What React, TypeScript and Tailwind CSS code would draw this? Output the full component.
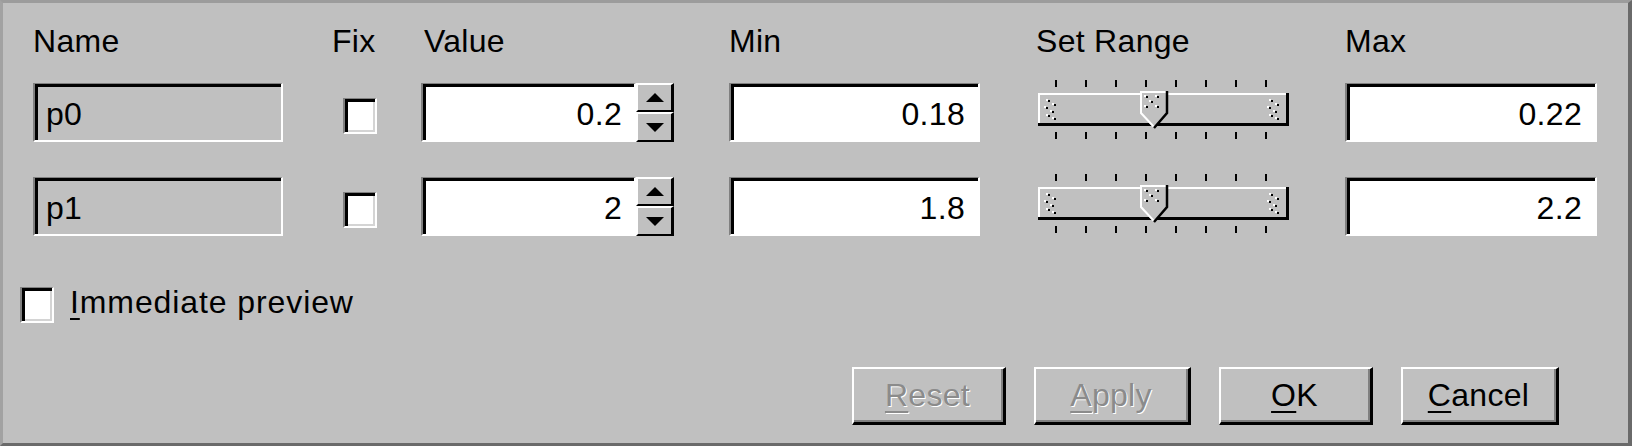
import React from "react";

const FONT = "font-['Liberation_Sans',Arial,sans-serif]";

type Param = { name: string; value: string; min: string; max: string };

const params: Param[] = [
  { name: "p0", value: "0.2", min: "0.18", max: "0.22" },
  { name: "p1", value: "2", min: "1.8", max: "2.2" },
];

const COLS = "grid grid-cols-[298px_90px_308px_307px_309px_252px]";

function Sunken({
  className = "",
  innerClass = "",
  children,
}: {
  className?: string;
  innerClass?: string;
  children?: React.ReactNode;
}) {
  return (
    <div
      className={`border-t border-l-2 border-b-2 border-r-2 border-t-[#808080] border-l-[#808080] border-b-white border-r-white ${className}`}
    >
      <div className={`h-full border-t-[3px] border-l-[3px] border-t-black border-l-black ${innerClass}`}>{children}</div>
    </div>
  );
}

function CheckBox({ className = "" }: { className?: string }) {
  return (
    <Sunken className={`h-[36px] w-[34px] shrink-0 ${className}`} innerClass="bg-white">
      <div className="h-full w-full border-b-2 border-r-2 border-b-[#d4d4d4] border-r-[#d4d4d4]" />
    </Sunken>
  );
}

function Arrow({ up }: { up: boolean }) {
  return (
    <svg width="18" height="9" viewBox="0 0 18 9">
      <polygon points={up ? "9,0 18,9 0,9" : "0,0 18,0 9,9"} fill="#000" />
    </svg>
  );
}

function SpinButton({ up, className = "" }: { up: boolean; className?: string }) {
  return (
    <div
      className={`flex items-center justify-center border-t-2 border-l-2 border-b-2 border-r-[3px] border-t-white border-l-white border-b-black border-r-black bg-[#c0c0c0] ${className}`}
    >
      <Arrow up={up} />
    </div>
  );
}

function Stipple({ dx }: { dx: number }) {
  const black = [
    [9, 7],
    [15, 11],
    [7, 14],
    [13, 18],
    [9, 22],
    [15, 25],
  ];
  return (
    <g transform={`translate(${dx},10)`}>
      {black.map(([x, y], i) => (
        <g key={i}>
          <rect x={x - 2} y={y - 1} width="2" height="2" fill="#fff" />
          <rect x={x} y={y} width="2" height="2" fill="#000" />
        </g>
      ))}
    </g>
  );
}

function RangeSlider() {
  const ticks = Array.from({ length: 8 }, (_, i) => 19 + i * 30);
  return (
    <svg width="256" height="59" viewBox="0 0 256 59" className="overflow-visible">
      {ticks.map((x) => (
        <rect key={`u${x}`} x={x} y={-3} width="2" height="7" fill="#000" />
      ))}
      <rect x="2" y="10" width="251" height="33" fill="#c0c0c0" />
      <rect x="2" y="10" width="249" height="2" fill="#fff" />
      <rect x="2" y="10" width="2" height="32" fill="#fff" />
      <rect x="2" y="40" width="251" height="3" fill="#000" />
      <rect x="250" y="10" width="3" height="33" fill="#000" />
      <Stipple dx={3} />
      <Stipple dx={226} />
      <polygon points="104,8 132,8 132,30 118,45 104,30" fill="#c0c0c0" />
      <polyline points="118,44 105,30 105,9 131,9" fill="none" stroke="#fff" strokeWidth="2" />
      <polyline points="131,8 131,30 118,45" fill="none" stroke="#000" strokeWidth="2.5" />
      {[
        [110, 13],
        [121, 13],
        [115, 18],
        [110, 23],
        [121, 23],
      ].map(([x, y], i) => (
        <g key={i}>
          <rect x={x - 2} y={y - 1} width="2" height="2" fill="#fff" />
          <rect x={x} y={y} width="2" height="2" fill="#000" />
        </g>
      ))}
      {ticks.map((x) => (
        <rect key={`d${x}`} x={x} y={49} width="2" height="7" fill="#000" />
      ))}
    </svg>
  );
}

function NumField({ value, width, pr = "pr-[13px]" }: { value: string; width: string; pr?: string }) {
  return (
    <Sunken className={`h-[59px] ${width}`} innerClass={`flex items-center justify-end bg-white ${pr}`}>
      <span>{value}</span>
    </Sunken>
  );
}

function ParamRow({ p }: { p: Param }) {
  return (
    <div className={`${COLS} items-start`}>
      <Sunken className="h-[59px] w-[250px]" innerClass="flex items-center bg-[#c0c0c0] pl-[8px]">
        <span>{p.name}</span>
      </Sunken>
      <CheckBox className="ml-[12px] mt-[15px]" />
      <div className="flex">
        <NumField value={p.value} width="w-[215px]" pr="pr-[12px]" />
        <div className="flex h-[59px] w-[38px] flex-col">
          <SpinButton up className="h-[29px]" />
          <SpinButton up={false} className="h-[30px]" />
        </div>
      </div>
      <NumField value={p.min} width="w-[251px]" />
      <RangeSlider />
      <NumField value={p.max} width="w-[252px]" />
    </div>
  );
}

function Mnemonic({ text }: { text: string }) {
  return (
    <span>
      <span className="underline decoration-2 underline-offset-[5px]">{text[0]}</span>
      {text.slice(1)}
    </span>
  );
}

function DialogButton({ label, width, disabled }: { label: string; width: string; disabled?: boolean }) {
  return (
    <div
      className={`h-[58px] ${width} border-t-2 border-l-2 border-b-[3px] border-r-[3px] border-t-white border-l-white border-b-black border-r-black bg-[#c0c0c0]`}
    >
      <div
        className={`flex h-full items-center justify-center border-b-2 border-r-2 border-b-[#808080] border-r-[#808080] ${
          disabled ? "text-[#8b8b8b] [text-shadow:1px_1px_0_#fff]" : "text-black"
        }`}
      >
        <Mnemonic text={label} />
      </div>
    </div>
  );
}

export default function App() {
  return (
    <div
      className={`${FONT} h-[446px] w-[1632px] overflow-hidden border-t-[3px] border-l-[3px] border-r-[4px] border-b-[3px] border-t-[#9c9c9c] border-l-[#a2a2a2] border-r-[#6a6a6a] border-b-[#6a6a6a] bg-[#c0c0c0] text-[32px] leading-[36px] tracking-[0.3px] text-black`}
    >
      <div className="flex flex-col pt-[20px]">
        <div className={`${COLS} pl-[30px]`}>
          <span>Name</span>
          <span className="pl-[1px]">Fix</span>
          <span className="pl-[3px]">Value</span>
          <span>Min</span>
          <span>Set Range</span>
          <span>Max</span>
        </div>
        <div className="mt-[24px] flex flex-col gap-[35px] pl-[30px]">
          {params.map((p) => (
            <ParamRow key={p.name} p={p} />
          ))}
        </div>
        <div className="mt-[51px] flex items-start gap-[16px] pl-[17px]">
          <CheckBox />
          <span className="leading-[30px] tracking-[0.9px]">
            <Mnemonic text="Immediate preview" />
          </span>
        </div>
        <div className="mt-[44px] flex justify-end gap-[28px] pr-[69px]">
          <DialogButton label="Reset" width="w-[154px]" disabled />
          <DialogButton label="Apply" width="w-[157px]" disabled />
          <DialogButton label="OK" width="w-[154px]" />
          <DialogButton label="Cancel" width="w-[158px]" />
        </div>
      </div>
    </div>
  );
}
